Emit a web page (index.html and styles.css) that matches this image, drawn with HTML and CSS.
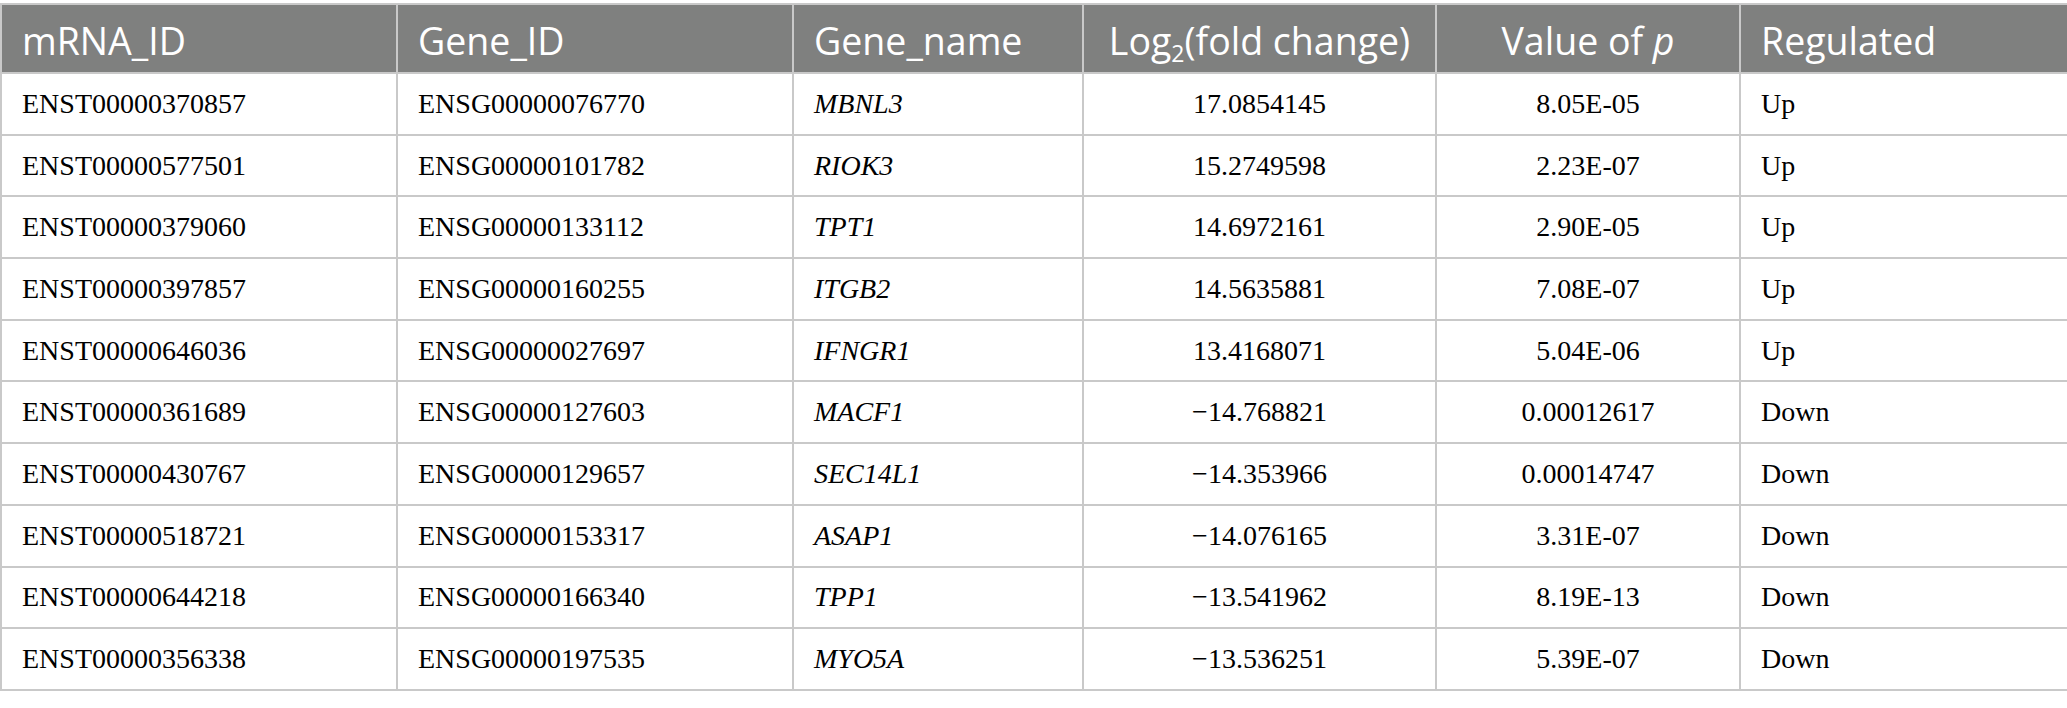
FILE: index.html
```html
<!DOCTYPE html>
<html>
<head>
<meta charset="utf-8">
<link rel="stylesheet" href="styles.css">
</head>
<body>
<table class="data">
  <colgroup>
    <col class="c1"><col class="c2"><col class="c3"><col class="c4"><col class="c5"><col class="c6">
  </colgroup>
  <thead>
    <tr>
      <th class="left">mRNA_ID</th>
      <th class="left">Gene_ID</th>
      <th class="left">Gene_name</th>
      <th class="center">Log<sub>2</sub>(fold change)</th>
      <th class="center">Value of <i>p</i></th>
      <th class="left">Regulated</th>
    </tr>
  </thead>
  <tbody>
    <tr><td>ENST00000370857</td><td>ENSG00000076770</td><td class="gene">MBNL3</td><td class="center">17.0854145</td><td class="center">8.05E-05</td><td>Up</td></tr>
    <tr><td>ENST00000577501</td><td>ENSG00000101782</td><td class="gene">RIOK3</td><td class="center">15.2749598</td><td class="center">2.23E-07</td><td>Up</td></tr>
    <tr><td>ENST00000379060</td><td>ENSG00000133112</td><td class="gene">TPT1</td><td class="center">14.6972161</td><td class="center">2.90E-05</td><td>Up</td></tr>
    <tr><td>ENST00000397857</td><td>ENSG00000160255</td><td class="gene">ITGB2</td><td class="center">14.5635881</td><td class="center">7.08E-07</td><td>Up</td></tr>
    <tr><td>ENST00000646036</td><td>ENSG00000027697</td><td class="gene">IFNGR1</td><td class="center">13.4168071</td><td class="center">5.04E-06</td><td>Up</td></tr>
    <tr><td>ENST00000361689</td><td>ENSG00000127603</td><td class="gene">MACF1</td><td class="center">−14.768821</td><td class="center">0.00012617</td><td>Down</td></tr>
    <tr><td>ENST00000430767</td><td>ENSG00000129657</td><td class="gene">SEC14L1</td><td class="center">−14.353966</td><td class="center">0.00014747</td><td>Down</td></tr>
    <tr><td>ENST00000518721</td><td>ENSG00000153317</td><td class="gene">ASAP1</td><td class="center">−14.076165</td><td class="center">3.31E-07</td><td>Down</td></tr>
    <tr><td>ENST00000644218</td><td>ENSG00000166340</td><td class="gene">TPP1</td><td class="center">−13.541962</td><td class="center">8.19E-13</td><td>Down</td></tr>
    <tr><td>ENST00000356338</td><td>ENSG00000197535</td><td class="gene">MYO5A</td><td class="center">−13.536251</td><td class="center">5.39E-07</td><td>Down</td></tr>
  </tbody>
</table>
</body>
</html>
```

FILE: styles.css
```css
html, body {
  margin: 0;
  padding: 0;
  background: #ffffff;
}
body {
  padding-top: 3px;
}
.data {
  border-collapse: collapse;
  table-layout: fixed;
  width: 2067px;
}
.c1 { width: 396px; }
.c2 { width: 396px; }
.c3 { width: 290px; }
.c4 { width: 353px; }
.c5 { width: 304px; }
.c6 { width: 328px; }
.data th, .data td {
  border: 2px solid #c9c9c9;
  padding: 0 20px;
  white-space: nowrap;
  overflow: hidden;
}
.data th {
  background: #7f807f;
  color: #ffffff;
  font-family: "Open Sans", "Noto Sans", sans-serif;
  font-weight: 400;
  font-size: 37.5px;
  line-height: 1.2;
  height: 69px;
  padding-top: 4px;
  padding-bottom: 0;
  box-sizing: border-box;
  vertical-align: middle;
}
.data th sub {
  font-size: 23px;
  vertical-align: -7px;
  line-height: 0;
}
.data td {
  font-family: "Liberation Serif", "Times New Roman", serif;
  font-size: 28px;
  color: #000000;
  height: 59.7px;
  vertical-align: middle;
}
.left { text-align: left; }
.center { text-align: center; }
.gene { font-style: italic; }
```
